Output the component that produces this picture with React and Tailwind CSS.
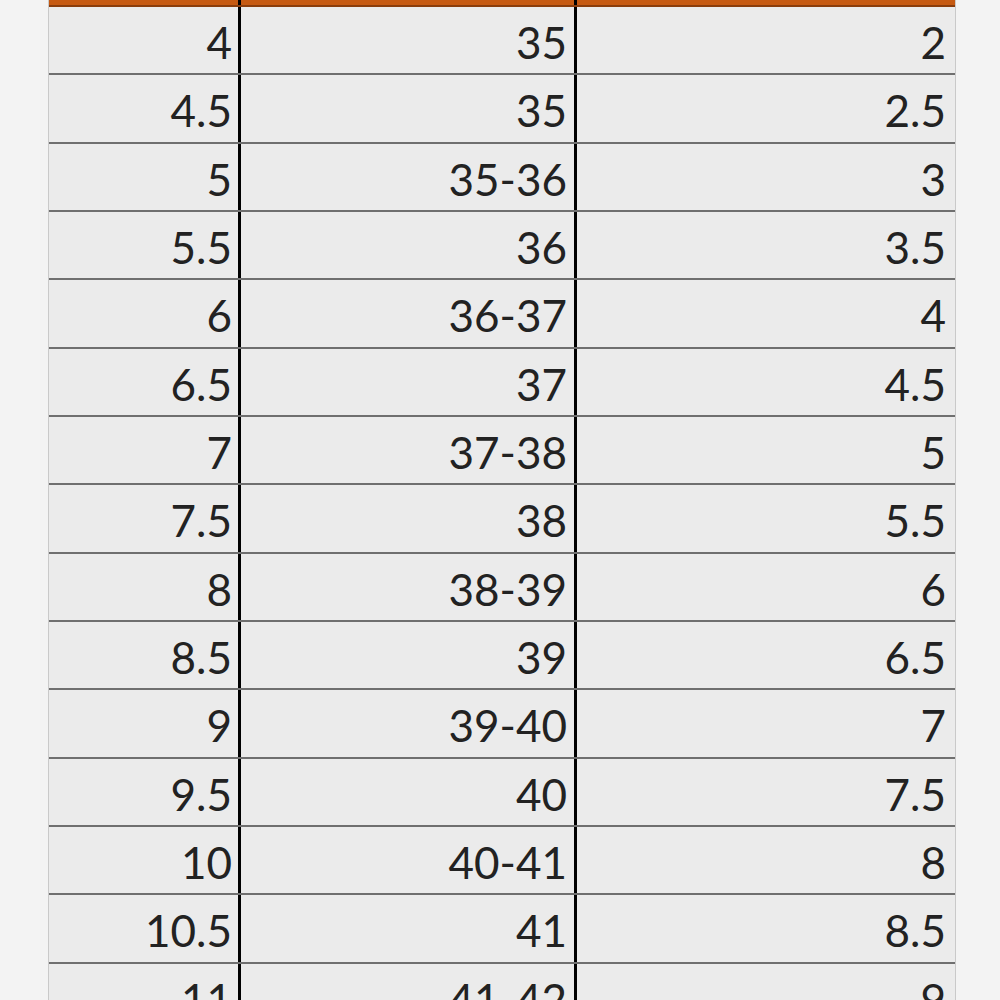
import React from "react";

const rows = [
  ["4", "35", "2"],
  ["4.5", "35", "2.5"],
  ["5", "35-36", "3"],
  ["5.5", "36", "3.5"],
  ["6", "36-37", "4"],
  ["6.5", "37", "4.5"],
  ["7", "37-38", "5"],
  ["7.5", "38", "5.5"],
  ["8", "38-39", "6"],
  ["8.5", "39", "6.5"],
  ["9", "39-40", "7"],
  ["9.5", "40", "7.5"],
  ["10", "40-41", "8"],
  ["10.5", "41", "8.5"],
  ["11", "41-42", "9"],
];

function App() {
  return (
    <div
      className="h-[1000px] w-[1000px] overflow-hidden bg-[#f3f3f3]"
      style={{ fontFamily: "Lato, 'Open Sans', sans-serif" }}
    >
      <div className="ml-[48px] w-[908px] border-x border-[#c9c9c9] bg-[#ebebeb]">
        <div className="grid h-[7px] grid-cols-[192px_336px_378px] border-b-2 border-[#8a3d0c] bg-[#c65a12]">
          <div className="border-r-[3px] border-black" />
          <div className="border-r-[3px] border-black" />
          <div />
        </div>
        {rows.map((r, i) => (
          <div
            key={i}
            className="grid h-[68.33px] grid-cols-[192px_336px_378px] border-b-2 border-[#6f6f6f] text-[44px] leading-none text-[#222222]"
          >
            <div className="flex items-center justify-end border-r-[3px] border-black pr-[6px] pt-[4px]">
              {r[0]}
            </div>
            <div className="flex items-center justify-end border-r-[3px] border-black pr-[7px] pt-[4px]">
              {r[1]}
            </div>
            <div className="flex items-center justify-end pr-[9px] pt-[4px]">
              {r[2]}
            </div>
          </div>
        ))}
      </div>
    </div>
  );
}

export default App;
